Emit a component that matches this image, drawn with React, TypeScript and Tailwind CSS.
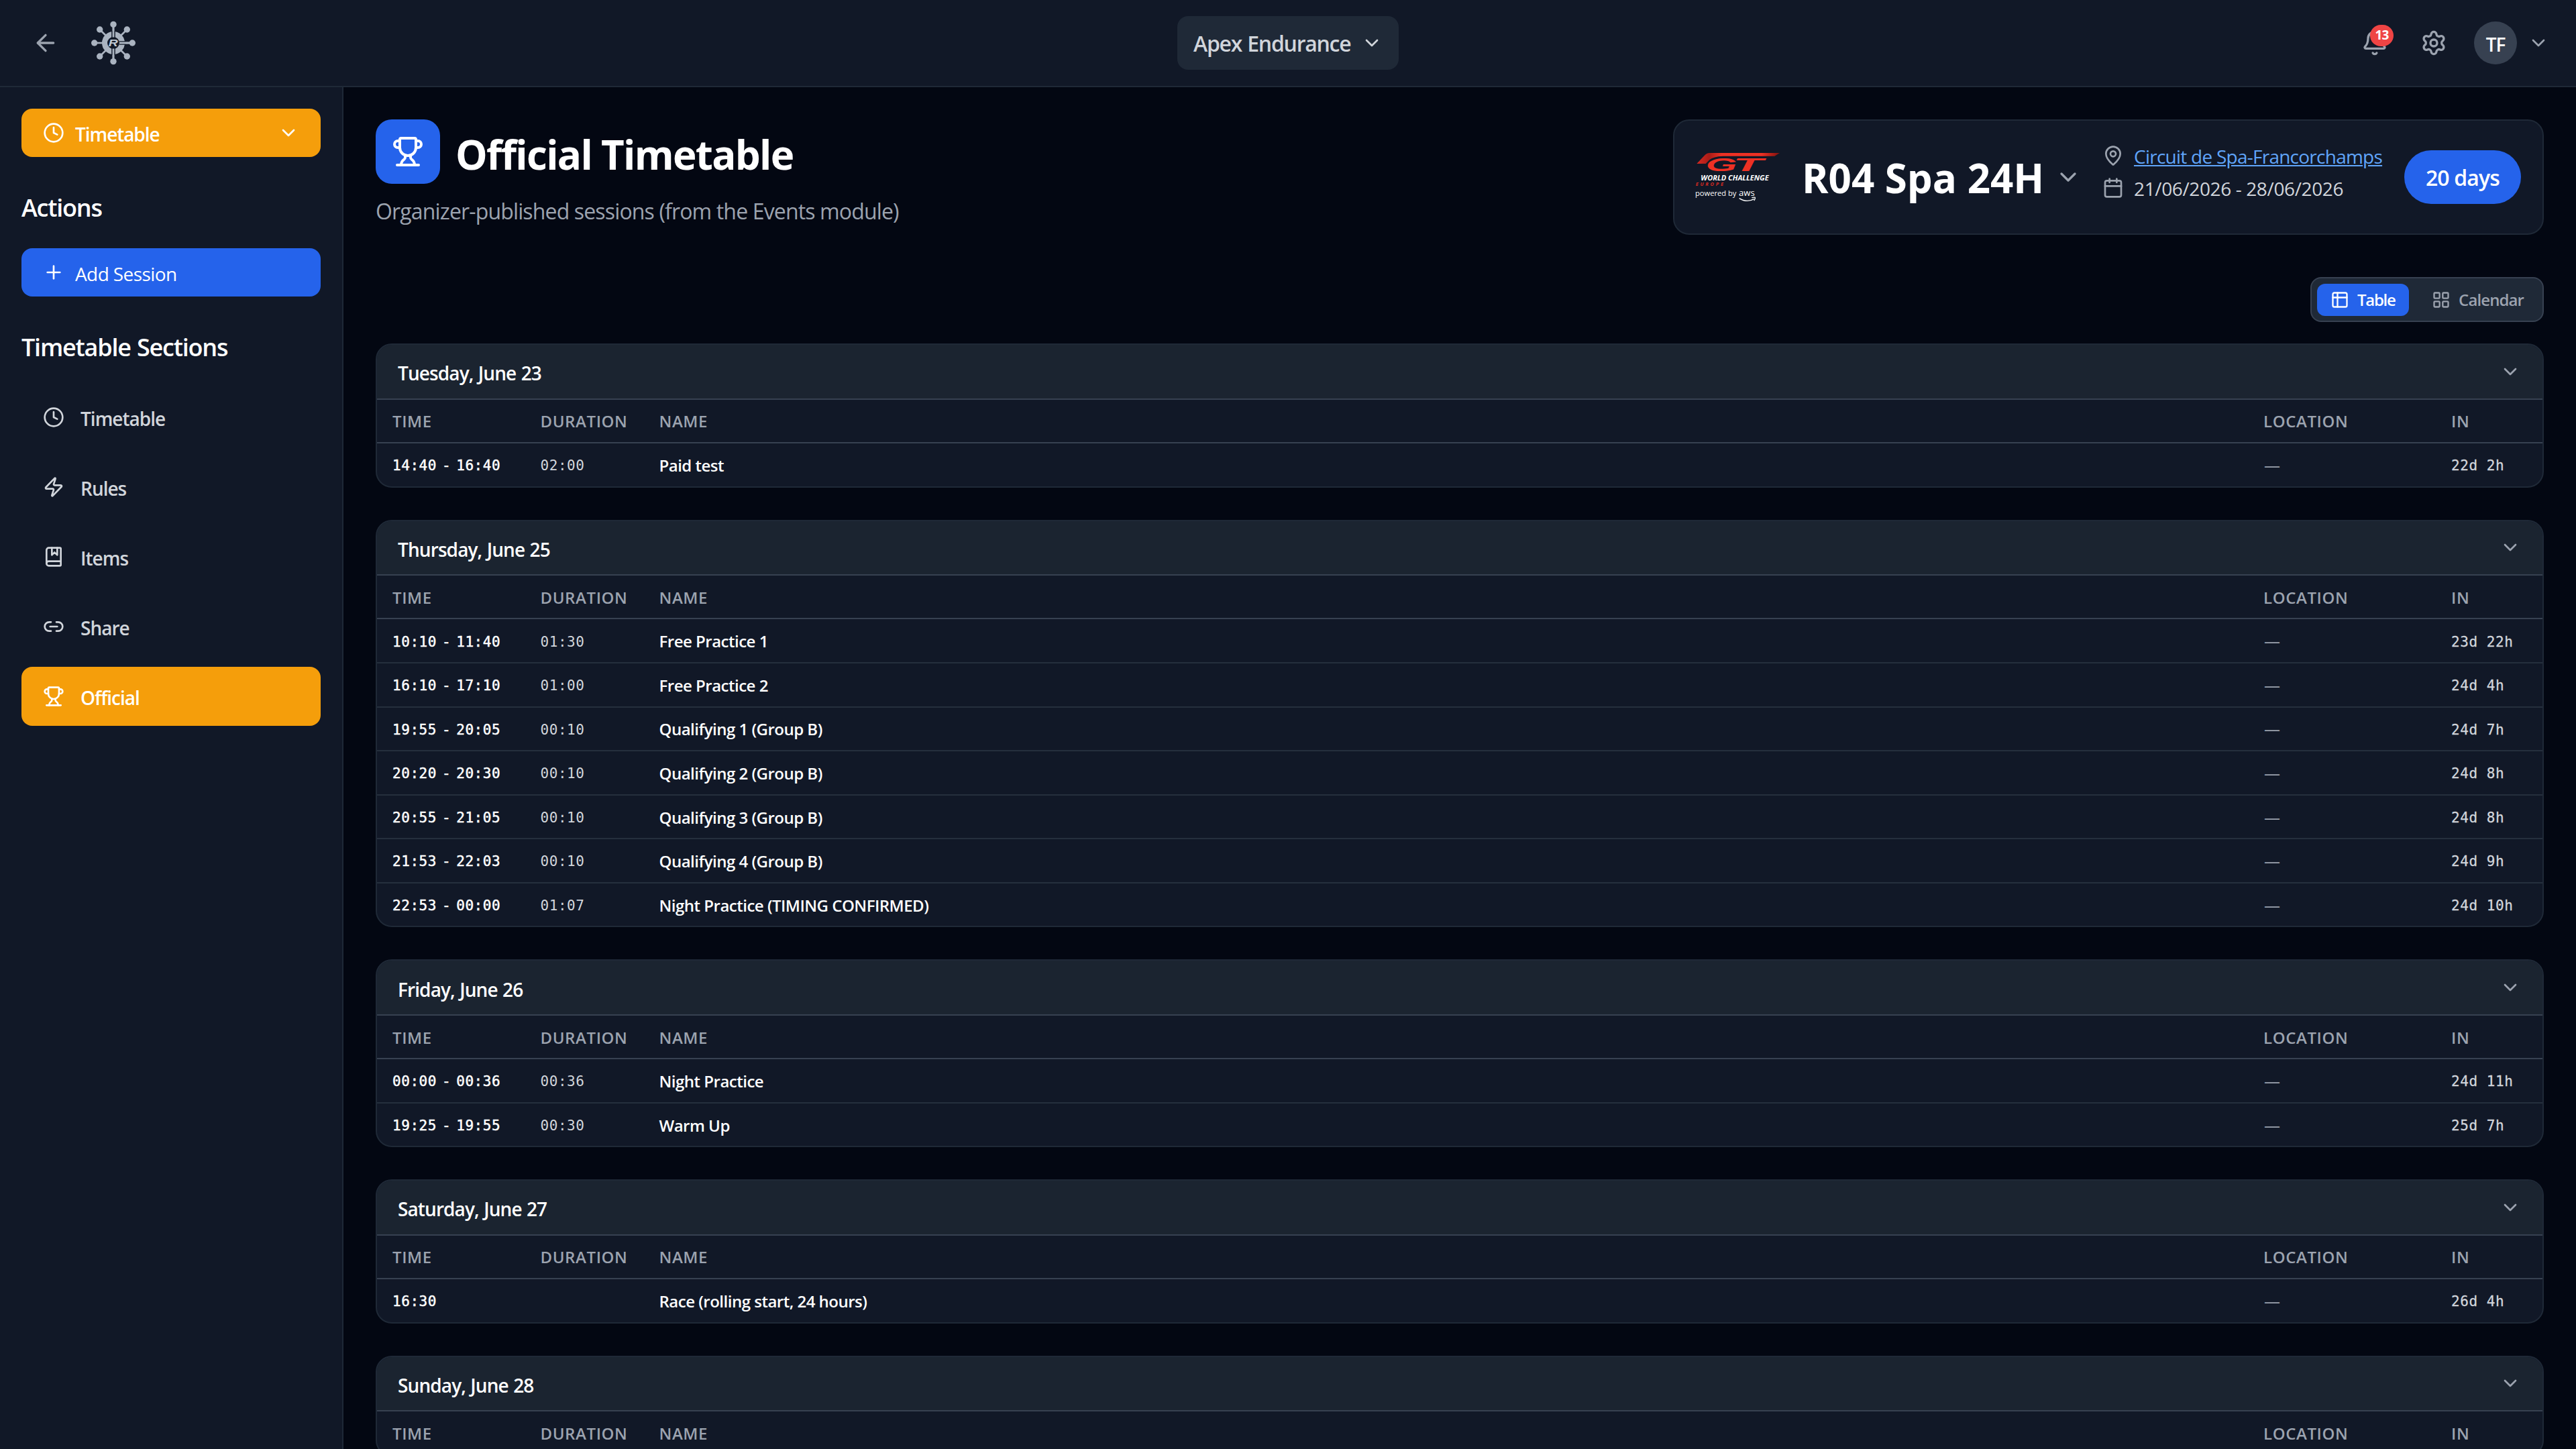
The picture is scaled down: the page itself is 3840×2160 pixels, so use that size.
import { useState } from "react";
import type { ReactNode } from "react";
import {
  ArrowLeft,
  Bell,
  BookMarked,
  Calendar,
  ChevronDown,
  Clock,
  LayoutGrid,
  Link2,
  MapPin,
  Plus,
  Settings,
  Trophy,
  Zap,
} from "lucide-react";
import type { LucideIcon } from "lucide-react";

type Session = {
  start: string;
  end?: string;
  duration?: string;
  name: string;
  location?: string;
  startsIn: string;
};

type Day = {
  label: string;
  sessions: Session[];
};

const days: Day[] = [
  {
    label: "Tuesday, June 23",
    sessions: [
      { start: "14:40", end: "16:40", duration: "02:00", name: "Paid test", startsIn: "22d 2h" },
    ],
  },
  {
    label: "Thursday, June 25",
    sessions: [
      { start: "10:10", end: "11:40", duration: "01:30", name: "Free Practice 1", startsIn: "23d 22h" },
      { start: "16:10", end: "17:10", duration: "01:00", name: "Free Practice 2", startsIn: "24d 4h" },
      { start: "19:55", end: "20:05", duration: "00:10", name: "Qualifying 1 (Group B)", startsIn: "24d 7h" },
      { start: "20:20", end: "20:30", duration: "00:10", name: "Qualifying 2 (Group B)", startsIn: "24d 8h" },
      { start: "20:55", end: "21:05", duration: "00:10", name: "Qualifying 3 (Group B)", startsIn: "24d 8h" },
      { start: "21:53", end: "22:03", duration: "00:10", name: "Qualifying 4 (Group B)", startsIn: "24d 9h" },
      { start: "22:53", end: "00:00", duration: "01:07", name: "Night Practice (TIMING CONFIRMED)", startsIn: "24d 10h" },
    ],
  },
  {
    label: "Friday, June 26",
    sessions: [
      { start: "00:00", end: "00:36", duration: "00:36", name: "Night Practice", startsIn: "24d 11h" },
      { start: "19:25", end: "19:55", duration: "00:30", name: "Warm Up", startsIn: "25d 7h" },
    ],
  },
  {
    label: "Saturday, June 27",
    sessions: [{ start: "16:30", name: "Race (rolling start, 24 hours)", startsIn: "26d 4h" }],
  },
  {
    label: "Sunday, June 28",
    sessions: [],
  },
];

const sections: { id: string; label: string; icon: LucideIcon }[] = [
  { id: "timetable", label: "Timetable", icon: Clock },
  { id: "rules", label: "Rules", icon: Zap },
  { id: "items", label: "Items", icon: BookMarked },
  { id: "share", label: "Share", icon: Link2 },
  { id: "official", label: "Official", icon: Trophy },
];

const gridCols = "grid grid-cols-[220.5px_177px_1fr_280px_159px] items-center";

function HubLogo() {
  const nodes = [
    [0, -27.6],
    [20.3, -20],
    [28.3, 0],
    [20.3, 20],
    [0, 27.6],
    [-20.3, 20],
    [-28.3, 0],
    [-20.3, -20],
  ];
  return (
    <svg viewBox="-33 -30 66 60" className="h-[60px] w-[66px] shrink-0 overflow-visible">
      <g fill="#aab3c0" stroke="#aab3c0">
        {nodes.map(([x, y]) => (
          <g key={`${x},${y}`}>
            <line x1={x * 0.5} y1={y * 0.5} x2={x} y2={y} strokeWidth="2.6" />
            <circle cx={x} cy={y} r="4.7" stroke="none" />
          </g>
        ))}
        <circle r="13" fill="none" strokeWidth="8" />
      </g>
      <g stroke="#111827" strokeWidth="5.6">
        <path d="M0-18V-8M0 8V18M9 0H18" />
      </g>
      <g stroke="#aab3c0" strokeWidth="2.8">
        <path d="M0-24V-8.5M0 8.5V24M9 0H25" />
      </g>
      <text
        x="-0.3"
        y="5.4"
        textAnchor="middle"
        fill="#c0c8d2"
        textLength="14"
        lengthAdjust="spacingAndGlyphs"
        className="font-['Liberation_Sans'] text-[15px] font-bold italic"
      >
        R
      </text>
    </svg>
  );
}

function SeriesLogo() {
  return (
    <svg viewBox="0 0 384 216" className="h-[72px] w-[128px] shrink-0 overflow-visible">
      <defs>
        <linearGradient id="sweep" x1="0" x2="1" y1="0" y2="0">
          <stop offset="0" stopColor="#d92a22" />
          <stop offset="0.15" stopColor="#a81c17" />
          <stop offset="0.3" stopColor="#ee3124" />
          <stop offset="0.78" stopColor="#ee3124" />
          <stop offset="1" stopColor="#7d100d" />
        </linearGradient>
      </defs>
      <path d="M62 0H375L352 14H120Q78 16 62 30L44 48H4L38 12Q48 0 62 0Z" fill="url(#sweep)" />
      <g fill="#ee3124" className="font-['Liberation_Sans'] text-[82px] font-bold italic">
        <text x="44" y="80" textLength="140" lengthAdjust="spacingAndGlyphs">G</text>
        <text x="166" y="80" textLength="134" lengthAdjust="spacingAndGlyphs">T</text>
      </g>
      <text
        x="22"
        y="122"
        fill="#fff"
        textLength="304"
        lengthAdjust="spacingAndGlyphs"
        className="font-['Open_Sans'] text-[29px] font-bold italic"
      >
        WORLD CHALLENGE
      </text>
      <text
        x="-1"
        y="148"
        fill="#d92a22"
        textLength="124"
        className="font-['Open_Sans'] text-[22px] font-bold italic"
      >
        EUROPE
      </text>
      <text
        x="-3"
        y="192"
        fill="#fff"
        textLength="184"
        lengthAdjust="spacingAndGlyphs"
        className="font-['Open_Sans'] text-[33px]"
      >
        powered by
      </text>
      <text
        x="192"
        y="191"
        fill="#fff"
        textLength="71"
        lengthAdjust="spacingAndGlyphs"
        className="font-['Open_Sans'] text-[36px]"
      >
        aws
      </text>
      <path d="M194 203Q228 224 260 206M250 200Q266 196 265 201Q265 208 260 213" fill="none" stroke="#fff" strokeWidth="4" />
    </svg>
  );
}

function TableIcon() {
  return (
    <svg
      viewBox="0 0 24 24"
      fill="none"
      stroke="currentColor"
      strokeWidth="2"
      strokeLinecap="round"
      strokeLinejoin="round"
      className="size-7"
    >
      <rect width="18" height="18" x="3" y="3" rx="2" />
      <path d="M3 9h18" />
      <path d="M9 3v18" />
    </svg>
  );
}

function Header() {
  return (
    <header className="grid h-[130px] shrink-0 grid-cols-3 items-center border-b-2 border-[#1f2937] bg-[#111827] px-10">
      <div className="flex items-center gap-12 pl-2">
        <button>
          <ArrowLeft className="size-10 text-[#9ca3af]" />
        </button>
        <HubLogo />
      </div>
      <button className="flex h-20 w-[330px] items-center justify-between justify-self-center rounded-2xl bg-[#1f2937] px-6 text-[#d1d5db]">
        <span className="pt-0.5 text-[32px] font-semibold tracking-[-1.25px] [word-spacing:1px]">Apex Endurance</span>
        <ChevronDown className="size-8" />
      </button>
      <div className="flex items-center justify-end text-[#9ca3af]">
        <button className="relative mr-12">
          <Bell className="size-10" />
          <span className="absolute -top-[7px] left-[13px] flex h-8 w-[35px] items-center justify-center rounded-full bg-[#ef4444] pb-px text-[19px] font-bold tracking-[-0.8px] text-white">
            13
          </span>
        </button>
        <button className="mr-10">
          <Settings className="size-10" />
        </button>
        <div className="mr-4 flex size-16 items-center justify-center rounded-full bg-[#374151] pt-1 text-[28px] font-semibold tracking-[-1px] text-white">
          TF
        </div>
        <ChevronDown className="size-8" />
      </div>
    </header>
  );
}

function SidebarHeading({ children }: { children: ReactNode }) {
  return (
    <h3 className="mt-12 mb-8 text-[36px] leading-[56px] font-semibold tracking-[-1.22px] text-white [word-spacing:1px]">
      {children}
    </h3>
  );
}

function Sidebar() {
  const [active, setActive] = useState("official");

  return (
    <aside className="w-[512px] shrink-0 border-r-2 border-[#1f2937] bg-[#111827] p-8">
      <button className="flex h-[72px] w-full items-center rounded-2xl bg-[#f59e0b] px-8 text-white">
        <Clock className="size-8" />
        <span className="ml-4 pt-1 text-[28px] font-semibold tracking-[-1.07px]">Timetable</span>
        <ChevronDown className="ml-auto size-8" />
      </button>

      <SidebarHeading>Actions</SidebarHeading>
      <button className="flex h-[72px] w-full items-center gap-4 rounded-2xl bg-[#2563eb] px-8 text-[28px] tracking-[-0.6px] text-white">
        <Plus className="size-8" />
        <span className="pt-1">Add Session</span>
      </button>

      <SidebarHeading>Timetable Sections</SidebarHeading>
      <nav className="flex flex-col gap-4">
        {sections.map(({ id, label, icon: Icon }) => (
          <button
            key={id}
            onClick={() => setActive(id)}
            className={`flex h-[88px] items-center gap-6 rounded-2xl px-8 text-[28px] font-semibold tracking-[-1px] ${
              active === id ? "bg-[#f59e0b] text-white" : "text-[#d1d5db]"
            }`}
          >
            <Icon className="size-8" />
            <span className="pt-1">{label}</span>
          </button>
        ))}
      </nav>
    </aside>
  );
}

function EventCard() {
  return (
    <div className="flex h-[172px] w-[1298px] items-center rounded-3xl border-2 border-[#1f2937] bg-[#111827] px-8">
      <SeriesLogo />
      <span className="ml-[30px] w-[362px] pt-0.5 text-[60px] leading-none font-bold whitespace-nowrap text-white">
        R04 Spa 24H
      </span>
      <ChevronDown className="ml-[15px] size-10 text-[#9ca3af]" />
      <div className="ml-[31px] flex w-[418px] flex-col gap-2 self-start pt-8 text-[28px] leading-10 whitespace-nowrap text-[#d1d5db]">
        <div className="flex h-10 items-center gap-[15px]">
          <MapPin className="size-8 text-[#9ca3af]" />
          <a className="pt-0.5 tracking-[-0.75px] text-[#60a5fa] underline">Circuit de Spa-Francorchamps</a>
        </div>
        <div className="flex h-10 items-center gap-[15px]">
          <Calendar className="size-8 text-[#9ca3af]" />
          <span className="pt-0.5 tracking-[-0.38px]">21/06/2026 - 28/06/2026</span>
        </div>
      </div>
      <span className="ml-auto flex h-20 w-[174px] items-center justify-center rounded-full bg-[#2563eb] pt-0.5 text-[32px] font-semibold tracking-[-0.84px] text-white">
        20 days
      </span>
    </div>
  );
}

function ViewToggle() {
  const [view, setView] = useState<"table" | "calendar">("table");
  const item = "flex h-12 items-center gap-3 rounded-xl px-5 text-[24px] font-semibold";

  return (
    <div className="flex h-[67px] w-[348px] items-center justify-between rounded-2xl border-2 border-[#374151] bg-[#1f2937] px-2">
      <button
        onClick={() => setView("table")}
        className={`${item} tracking-[-1.28px] ${view === "table" ? "bg-[#2563eb] text-white" : "text-[#9ca3af]"}`}
      >
        <TableIcon />
        Table
      </button>
      <button
        onClick={() => setView("calendar")}
        className={`${item} tracking-[-0.9px] ${view === "calendar" ? "bg-[#2563eb] text-white" : "text-[#9ca3af]"}`}
      >
        <LayoutGrid className="size-7" />
        Calendar
      </button>
    </div>
  );
}

function DayTable({ day }: { day: Day }) {
  return (
    <section className="shrink-0 overflow-hidden rounded-3xl border-2 border-[#1f2937] bg-[#111827]">
      <div className="flex h-[81.4px] items-center justify-between border-b-2 border-[#374151] bg-[#1b2430] px-8">
        <h2 className="-ml-px pt-[5px] text-[28px] font-semibold tracking-[-0.9px] text-white [word-spacing:1px]">
          {day.label}
        </h2>
        <ChevronDown className="size-8 text-[#9ca3af]" />
      </div>
      <div
        className={`${gridCols} h-[65.5px] border-b-2 border-[#374151] pt-0.5 text-[24px] font-semibold tracking-[0.6px] text-[#9ca3af]`}
      >
        <span className="pl-[23px]">TIME</span>
        <span className="pl-[23px]">DURATION</span>
        <span className="pl-[23px]">NAME</span>
        <span className="pl-[23px]">LOCATION</span>
        <span className="pl-[23px]">IN</span>
      </div>
      {day.sessions.map((s) => (
        <div
          key={s.start}
          className={`${gridCols} h-[65.6px] border-b-2 border-[#252f3d] font-['DejaVu_Sans_Mono',monospace] text-[21px] tracking-[0.56px] text-[#d1d5db] last:h-[63.4px] last:border-b-0`}
        >
          <span className="flex gap-2 pt-1 pl-[23px] text-white [-webkit-text-stroke:0.5px]">
            <span>{s.start}</span>
            {s.end && (
              <>
                <span>-</span>
                <span>{s.end}</span>
              </>
            )}
          </span>
          <span className="pt-1 pl-[23px]">{s.duration}</span>
          <span className="pt-0.5 pl-[23px] font-['Open_Sans',sans-serif] text-[24px] font-semibold tracking-[-0.5px] text-white">
            {s.name}
          </span>
          <span className="pt-0.5 pl-6 font-['Open_Sans',sans-serif] text-[24px] text-[#9ca3af]">
            {s.location ?? "—"}
          </span>
          <span className="pt-1 pl-[23px] [-webkit-text-stroke:0.3px]">{s.startsIn}</span>
        </div>
      ))}
    </section>
  );
}

export default function App() {
  return (
    <div className="flex h-screen flex-col overflow-hidden bg-[#030712] font-['Open_Sans','Noto_Sans',sans-serif]">
      <Header />
      <div className="flex min-h-0 flex-1">
        <Sidebar />
        <main className="flex min-w-0 flex-1 flex-col overflow-hidden px-12 pt-12">
          <div className="flex shrink-0 items-start justify-between">
            <div>
              <div className="flex h-24 items-center gap-[23px]">
                <div className="flex size-24 items-center justify-center rounded-3xl bg-[#2563eb] text-white">
                  <Trophy className="size-12" />
                </div>
                <h1 className="pt-2 text-[60px] leading-[72px] font-bold tracking-[-1.65px] text-white">
                  Official Timetable
                </h1>
              </div>
              <p className="mt-[17px] text-[32px] leading-[48px] tracking-[-0.85px] text-[#9ca3af]">
                Organizer-published sessions (from the Events module)
              </p>
            </div>
            <EventCard />
          </div>
          <div className="mt-[63px] flex shrink-0 justify-end">
            <ViewToggle />
          </div>
          <div className="mt-[32.3px] flex flex-col gap-12">
            {days.map((day) => (
              <DayTable key={day.label} day={day} />
            ))}
          </div>
        </main>
      </div>
    </div>
  );
}
